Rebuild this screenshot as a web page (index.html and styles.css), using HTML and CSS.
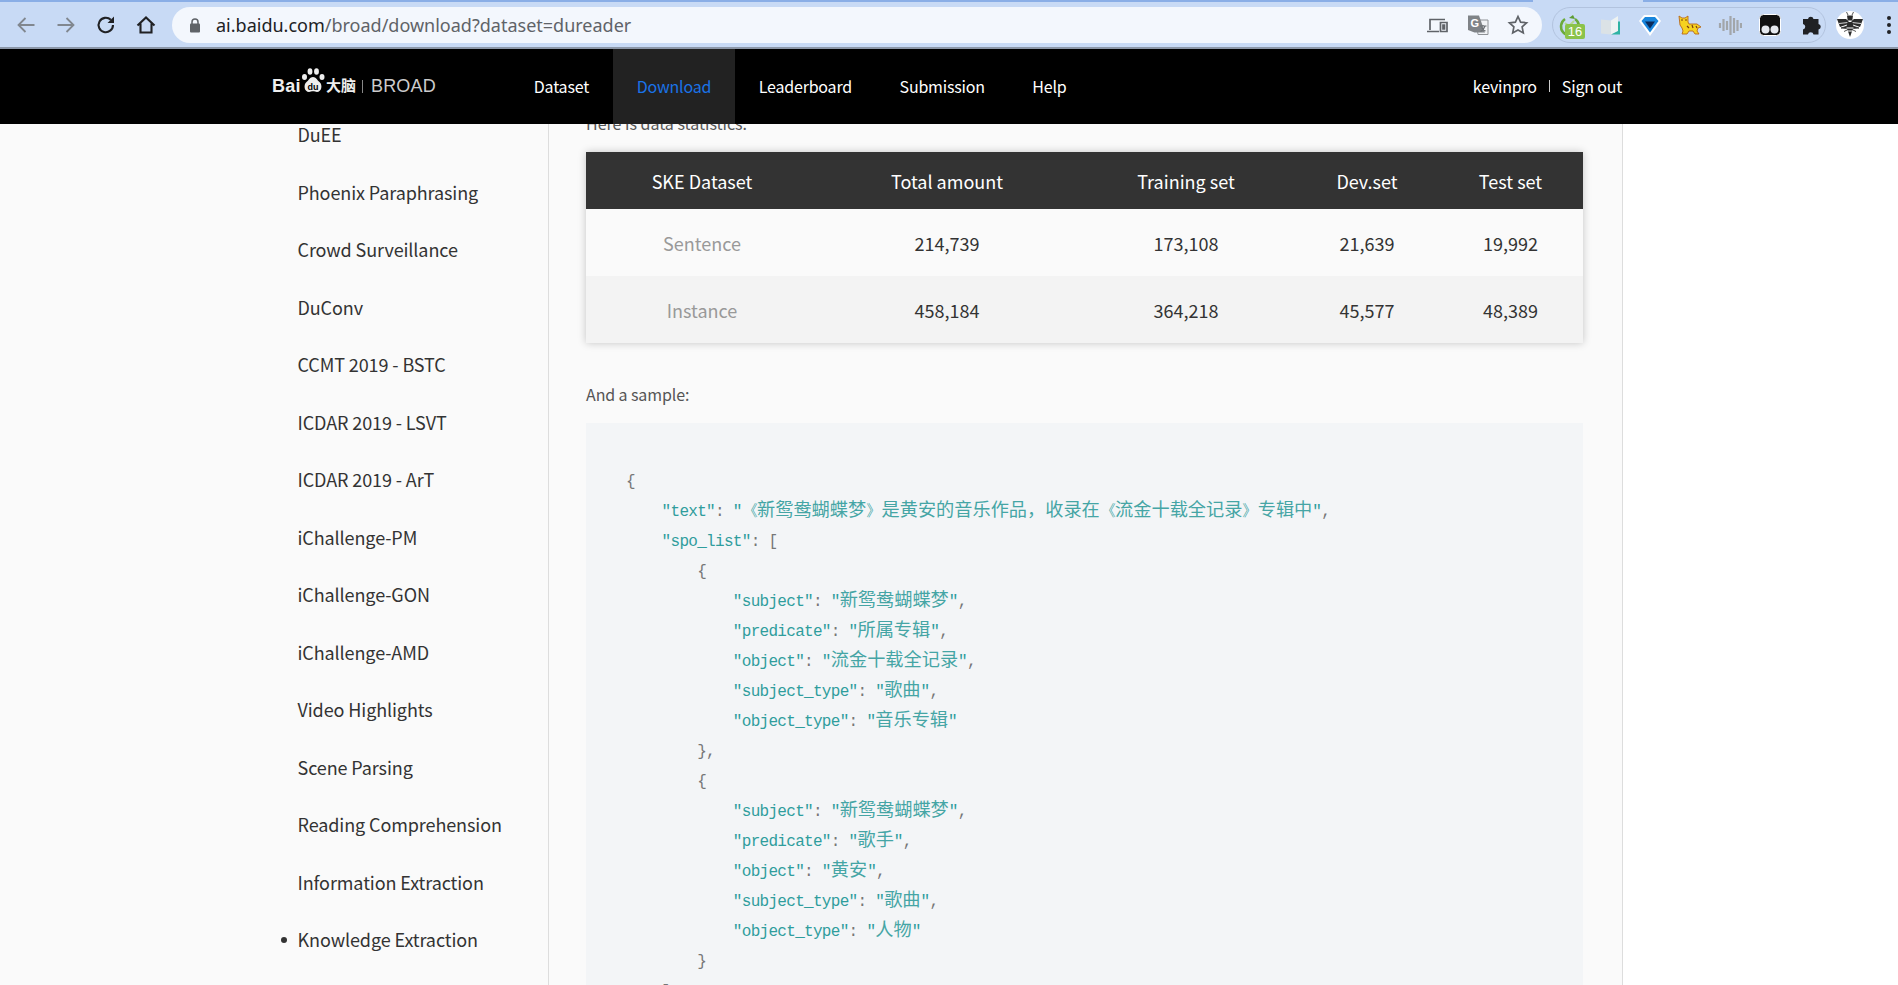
FILE: index.html
```html
<!doctype html>
<html lang="en">
    <head>
        <title>BROAD - Download</title>
        <link rel="stylesheet" href="styles.css">
    </head>
    <body>
        <div class="chrome">
            <div class="chrome-tabs"><span class="tab-strip"></span><span class="tab-gap"></span><span class="tab-strip"></span></div>
            <div class="toolbar">
                <svg class="tool-icon" viewBox="0 0 24 24"><path d="M20.500 12H4.500M11.500 5l-7 7 7 7" class="stroke-grey"/></svg>
                <svg class="tool-icon" viewBox="0 0 24 24"><path d="M3.500 12h16M12.500 5l7 7-7 7" class="stroke-grey"/></svg>
                <svg class="tool-icon" viewBox="0 0 24 24"><path d="M19 12a7.200 7.200 0 1 1-2.200-5.200" class="stroke-dark"/><path d="M20 3.500v6.500h-6.500z" class="fill-dark"/></svg>
                <svg class="tool-icon" viewBox="0 0 24 24"><path d="M3.500 12.500L12 4.500l8.500 8M6.500 10.500v9h11v-9" class="stroke-dark"/></svg>
                <div class="omnibox">
                    <svg class="lock" viewBox="0 0 12 16"><path d="M3 7V5a3 3 0 0 1 6 0v2" fill="none" stroke="#5f6368" stroke-width="1.500"/><rect x="1" y="6.500" width="10" height="9" rx="1" fill="#5f6368"/></svg>
                    <span class="url"><span class="url-host">ai.baidu.com</span>/broad/download?dataset=dureader</span>
                    <span class="omni-icons">
                        <svg class="omni-icon" viewBox="0 0 24 24"><path d="M4 17V6.500h15M1 18.500h12M14.500 9.500h6.500v9h-6.500zM17 12h1.500v4H17z" class="stroke-thin"/></svg>
                        <svg class="omni-icon" viewBox="0 0 24 24">
                            <path d="M10 7h12v14.500H12z" fill="#f1f3f6" stroke="#8e9296"/>
                            <path d="M2 2.500h11l6 17H8.500L2 17z" fill="#7f8387"/>
                            <text x="4.500" y="14" class="translate-g">G</text>
                            <path d="M14 13h6.500M17 12v1M19 13c-1 3.500-2.500 4.500-4.500 5.500M15.500 14.500c1 1.500 2.500 3 4 3.500" class="stroke-translate"/>
                        </svg>
                        <svg class="omni-icon" viewBox="0 0 24 24"><path d="M12 3.500l2.600 5.600 6 .7-4.500 4.100 1.200 6L12 17l-5.300 2.900 1.200-6-4.500-4.100 6-.7z" class="stroke-thin"/></svg>
                    </span>
                </div>
                <div class="extensions">
                    <span class="ext ext-badged">
                        <svg viewBox="0 0 24 24"><path d="M7 6a9 9 0 1 0 10 0" fill="none" stroke="#6cab3c" stroke-width="2.500"/><path d="M11 5l4-3 2 4z" fill="#5d9c32"/><path d="M7 10l4 3 5-5" fill="none" stroke="#b5d98f" stroke-width="2"/></svg>
                        <span class="ext-badge">16</span>
                    </span>
                    <span class="ext"><svg viewBox="0 0 24 24"><path d="M3 6.500l10 1v14l-10-1z" fill="#dbe2e6"/><path d="M13 7.500L20 3v15l-7 3.500z" fill="#eef3f2"/><path d="M13 21.500l7-3.500V8.500h2v13z" fill="#2fb3a3"/></svg></span>
                    <span class="ext"><svg viewBox="0 0 24 24"><path d="M1 8l5-6h12l5 6-11 15z" fill="#fff"/><path d="M3.500 8l3.500-4h10l3.500 4-8.500 11.500z" fill="#1a86dc"/><path d="M7 8.500h10l-5 7z" fill="#0a2a5a"/></svg></span>
                    <span class="ext"><svg viewBox="0 0 24 24">
                        <path d="M1 3l3 2h3l3-2v6l1 2h8l4 3-3 1-1 3 2 3h-4l-2-3h-4l-2 3H4l1-3-1-3-2-3z" fill="#f6d21f" stroke="#b8691c" stroke-width=".9"/>
                        <path d="M3 7h2M7 7h2M9 13l2 2M14 12l1 3M18 13l1 2" stroke="#7a3d10" stroke-width="1.200" fill="none"/>
                    </svg></span>
                    <span class="ext"><svg viewBox="0 0 24 24"><path d="M2 10v5M5.500 6v12M9 8v9M12.500 3v19M16 5v15M19.500 7v11M23 10v5" fill="none" stroke="#a2a6aa" stroke-width="2.200"/></svg></span>
                    <span class="ext"><svg viewBox="0 0 24 24"><rect x="1.500" y="1.500" width="21" height="21" rx="4" fill="#111" stroke="#fff"/><circle cx="7.500" cy="16.500" r="4" fill="#e6e9ee"/><circle cx="16.500" cy="16.500" r="4" fill="#e6e9ee"/></svg></span>
                    <span class="ext"><svg viewBox="0 0 24 24"><path d="M10 6a2.800 2.800 0 0 1 5.500 0h5v5a2.800 2.800 0 0 1 0 5.500v5h-5a2.800 2.800 0 0 0-5.500 0H5v-5a2.800 2.800 0 0 0 0-5.500V6z" fill="#202124"/></svg></span>
                </div>
                <span class="avatar">
                    <svg viewBox="0 0 28 28">
                        <circle cx="14" cy="14" r="14" fill="#fff"/>
                        <path d="M1 8h9l2.500 2v3L4 16zM27 8h-9l-2.500 2v3L24 16z" fill="#2b2b2b"/>
                        <path d="M3 12.500l9-1M25 12.500l-9-1" stroke="#fff" stroke-width=".8"/>
                        <path d="M11 4.500h6l-.7 5h-4.600zM11.500 11h5l1 5-3.500 10-3.500-10z" fill="#2b2b2b"/>
                        <path d="M5 17l6.500-2v2.500zM23 17l-6.500-2v2.500zM8 20.500l4-2M20 20.500l-4-2" fill="#2b2b2b" stroke="#2b2b2b" stroke-width=".8"/>
                        <path d="M10.500 17h7M11.500 20h5" stroke="#fff"/>
                        <path d="M12 4l-1.500-3M16 4l1.500-3" stroke="#2b2b2b" stroke-width=".8"/>
                    </svg>
                </span>
                <span class="menu-dots"><i></i><i></i><i></i></span>
            </div>
        </div>

        <div class="site">
            <header class="topnav">
                <a class="logo">
                    <span class="logo-bai">Bai</span>
                    <svg class="logo-paw" viewBox="0 0 24 25">
                        <ellipse cx="3.500" cy="9" rx="2.500" ry="3" fill="#eee"/>
                        <ellipse cx="9" cy="3.500" rx="2.400" ry="3.300" fill="#eee"/>
                        <ellipse cx="15.500" cy="3.500" rx="2.400" ry="3.300" fill="#eee"/>
                        <ellipse cx="21" cy="9" rx="2.500" ry="3" fill="#eee"/>
                        <path d="M12 9c3 0 4 3 6.500 5 3.500 3 2 10-2.500 10-1.500 0-2.500-.7-4-.7S9.500 24 8 24c-4.500 0-6-7-2.500-10C8 12 9 9 12 9z" fill="#eee"/>
                        <text x="12" y="21.500" class="paw-du">du</text>
                    </svg>
                    <span class="logo-cn">大脑</span>
                    <span class="logo-bar"></span>
                    <span class="logo-broad">BROAD</span>
                </a>
                <nav class="nav-links">
                    <a class="nav-link">Dataset</a>
                    <a class="nav-link active">Download</a>
                    <a class="nav-link">Leaderboard</a>
                    <a class="nav-link">Submission</a>
                    <a class="nav-link">Help</a>
                </nav>
                <div class="nav-user">
                    <a>kevinpro</a>
                    <span class="nav-sep"></span>
                    <a>Sign out</a>
                </div>
            </header>

            <div class="layout">
                <ul class="sidebar">
                    <li>DuEE</li>
                    <li>Phoenix Paraphrasing</li>
                    <li>Crowd Surveillance</li>
                    <li>DuConv</li>
                    <li>CCMT 2019 - BSTC</li>
                    <li>ICDAR 2019 - LSVT</li>
                    <li>ICDAR 2019 - ArT</li>
                    <li>iChallenge-PM</li>
                    <li>iChallenge-GON</li>
                    <li>iChallenge-AMD</li>
                    <li>Video Highlights</li>
                    <li>Scene Parsing</li>
                    <li>Reading Comprehension</li>
                    <li>Information Extraction</li>
                    <li class="current">Knowledge Extraction</li>
                </ul>
                <main class="content">
                    <p class="intro">Here is data statistics.</p>
                    <table class="stats">
                        <colgroup>
                            <col class="col-a"><col class="col-b"><col class="col-c"><col class="col-d"><col class="col-e">
                        </colgroup>
                        <thead>
                            <tr><th>SKE Dataset</th><th>Total amount</th><th>Training set</th><th>Dev.set</th><th>Test set</th></tr>
                        </thead>
                        <tbody>
                            <tr><td class="row-name">Sentence</td><td>214,739</td><td>173,108</td><td>21,639</td><td>19,992</td></tr>
                            <tr><td class="row-name">Instance</td><td>458,184</td><td>364,218</td><td>45,577</td><td>48,389</td></tr>
                        </tbody>
                    </table>
                    <p class="sample-label">And a sample:</p>
                    <div class="code">
                        <div class="line">{</div>
                        <div class="line">    <b>"text"</b>: <b>"《<i>新鸳鸯蝴蝶梦</i>》<i>是黄安的音乐作品，收录在</i>《<i>流金十载全记录</i>》<i>专辑中</i>"</b>,</div>
                        <div class="line">    <b>"spo_list"</b>: [</div>
                        <div class="line">        {</div>
                        <div class="line">            <b>"subject"</b>: <b>"<i>新鸳鸯蝴蝶梦</i>"</b>,</div>
                        <div class="line">            <b>"predicate"</b>: <b>"<i>所属专辑</i>"</b>,</div>
                        <div class="line">            <b>"object"</b>: <b>"<i>流金十载全记录</i>"</b>,</div>
                        <div class="line">            <b>"subject_type"</b>: <b>"<i>歌曲</i>"</b>,</div>
                        <div class="line">            <b>"object_type"</b>: <b>"<i>音乐专辑</i>"</b></div>
                        <div class="line">        },</div>
                        <div class="line">        {</div>
                        <div class="line">            <b>"subject"</b>: <b>"<i>新鸳鸯蝴蝶梦</i>"</b>,</div>
                        <div class="line">            <b>"predicate"</b>: <b>"<i>歌手</i>"</b>,</div>
                        <div class="line">            <b>"object"</b>: <b>"<i>黄安</i>"</b>,</div>
                        <div class="line">            <b>"subject_type"</b>: <b>"<i>歌曲</i>"</b>,</div>
                        <div class="line">            <b>"object_type"</b>: <b>"<i>人物</i>"</b></div>
                        <div class="line">        }</div>
                        <div class="line">    ]</div>
                    </div>
                </main>
            </div>
        </div>
    </body>
</html>
```

FILE: styles.css
```css
* {
    box-sizing: border-box;
}
html, body {
    height: 100%;
}
body {
    margin: 0;
    overflow: hidden;
    display: flex;
    flex-direction: column;
    background: #fff;
    color: #333;
    font-family: "Noto Sans CJK SC", "Noto Sans", sans-serif;
    font-size: 18px;
}

/* browser bar */
.chrome {
    flex: none;
    height: 49px;
    background: #c8daf5;
    border-bottom: 2px solid #8c97a8;
}
.chrome-tabs {
    display: flex;
    height: 2px;
}
.tab-strip {
    flex: 1;
    background: #8aaee6;
}
.tab-strip:first-child {
    flex: none;
    width: 1533px;
}
.tab-gap {
    width: 110px;
}
.toolbar {
    display: flex;
    align-items: center;
    height: 45px;
    padding: 0 0 0 14px;
}
.tool-icon {
    width: 24px;
    height: 24px;
    margin-right: 16px;
    flex: none;
}
.stroke-grey {
    fill: none;
    stroke: #81878f;
    stroke-width: 1.8;
}
.stroke-dark {
    fill: none;
    stroke: #202124;
    stroke-width: 2.1;
}
.fill-dark {
    fill: #202124;
}
.stroke-thin {
    fill: none;
    stroke: #5f6368;
    stroke-width: 1.7;
}
.stroke-translate {
    fill: none;
    stroke: #6b6f73;
    stroke-width: 1.200;
}
.translate-g {
    fill: #fff;
    font-family: "Liberation Sans", sans-serif;
    font-size: 11px;
    font-weight: bold;
}
.omnibox {
    display: flex;
    align-items: center;
    width: 1370px;
    height: 36px;
    margin-left: -2px;
    padding: 0 12px 0 17px;
    border-radius: 18px;
    background: #f3f7fd;
}
.lock {
    width: 12px;
    height: 16px;
    margin-right: 15px;
}
.url {
    flex: 1;
    color: #5f6368;
    font-family: "Noto Sans", sans-serif;
    font-size: 18px;
    white-space: nowrap;
}
.url-host {
    color: #202124;
}
.omni-icons {
    display: flex;
    gap: 16px;
}
.omni-icon {
    width: 24px;
    height: 24px;
}
.extensions {
    display: flex;
    align-items: center;
    gap: 16px;
    height: 36px;
    margin-left: 10px;
    padding: 0 3px 0 5px;
    border: 1px solid #b2c3de;
    border-radius: 18px;
}
.ext {
    position: relative;
    width: 24px;
    height: 24px;
    flex: none;
}
.ext svg {
    display: block;
    width: 24px;
    height: 24px;
}
.ext-badge {
    position: absolute;
    left: 7px;
    top: 11px;
    width: 20px;
    height: 15px;
    border-radius: 2px;
    background: #8bc34a;
    color: #fff;
    font-family: "Liberation Sans", sans-serif;
    font-size: 13px;
    line-height: 15px;
    text-align: center;
}
.avatar {
    width: 28px;
    height: 28px;
    margin-left: 10px;
    flex: none;
}
.avatar svg {
    display: block;
}
.menu-dots {
    display: flex;
    flex-direction: column;
    gap: 3px;
    margin-left: 23px;
}
.menu-dots i {
    width: 4px;
    height: 4px;
    border-radius: 50%;
    background: #202124;
}

/* site */
.site {
    position: relative;
    flex: 1;
    min-height: 0;
    overflow: hidden;
    background: #fff;
}
.topnav {
    position: absolute;
    left: 0;
    right: 0;
    top: 0;
    z-index: 2;
    display: flex;
    height: 75px;
    padding: 0 276px 0 272px;
    background: #000;
    color: #fff;
}
.logo {
    display: flex;
    align-items: center;
    width: 238px;
    color: #eee;
}
.logo-bai {
    font-family: "Liberation Sans", sans-serif;
    font-size: 18px;
    font-weight: bold;
    letter-spacing: 0.3px;
}
.logo-paw {
    width: 24px;
    height: 25px;
    margin-top: -12px;
}
.paw-du {
    fill: #000;
    font-family: "Liberation Sans", sans-serif;
    font-size: 9px;
    font-weight: bold;
    text-anchor: middle;
}
.logo-cn {
    margin: -4px 0 0 1px;
    font-size: 15px;
    font-weight: bold;
}
.logo-bar {
    width: 1px;
    height: 13px;
    margin: 0 8px 0 6px;
    background: #888;
}
.logo-broad {
    color: #ccc;
    font-family: "Liberation Sans", sans-serif;
    font-size: 18px;
    letter-spacing: 0.2px;
}
.nav-links {
    display: flex;
    flex: 1;
}
.nav-link {
    display: flex;
    align-items: center;
    padding: 0 23.800px 2px;
    font-size: 16px;
    letter-spacing: -0.2px;
}
.nav-link.active {
    background: #222;
    color: #1a73e8;
}
.nav-user {
    display: flex;
    align-items: center;
    padding-bottom: 2px;
    font-size: 16px;
    letter-spacing: -0.2px;
}
.nav-sep {
    width: 1px;
    height: 12px;
    margin: 0 12px 0 12px;
    background: #ccc;
}

.layout {
    display: flex;
    height: 100%;
}
.sidebar {
    width: 549px;
    flex: none;
    margin: 0;
    padding: 57px 0 0 297.500px;
    list-style: none;
    border-right: 1px solid #ddd;
    background: #fafafa;
    font-size: 18px;
    letter-spacing: -0.1px;
}
.sidebar li {
    position: relative;
    height: 57.500px;
    line-height: 57.500px;
    white-space: nowrap;
}
.current::before {
    content: "";
    position: absolute;
    left: -17px;
    top: 26px;
    width: 6px;
    height: 6px;
    border-radius: 50%;
    background: #333;
}
.content {
    width: 1074px;
    flex: none;
    padding: 0 39px 0 37px;
    border-right: 1px solid #ddd;
    background: #fafafa;
    overflow: hidden;
}
.intro {
    margin: 59px 0 0;
    color: #555;
    font-size: 16px;
    line-height: 30px;
}
.stats {
    width: 997px;
    margin-top: 14px;
    border-collapse: collapse;
    table-layout: fixed;
    box-shadow: 0 0 8px rgba(0, 0, 0, 0.22);
    text-align: center;
}
.col-a {
    width: 232px;
}
.col-b {
    width: 258px;
}
.col-c {
    width: 220px;
}
.col-d {
    width: 142px;
}
.stats th {
    height: 57px;
    padding: 0;
    background: #333;
    color: #fff;
    font-weight: normal;
}
.stats td {
    height: 67px;
    padding: 0;
    font-size: 18px;
}
.stats tbody tr:nth-child(2) {
    background: #f3f3f3;
}
.row-name {
    color: #999;
}
.sample-label {
    margin: 36px 0 0;
    color: #555;
    font-size: 16px;
    letter-spacing: -0.1px;
    line-height: 30px;
}
.code {
    height: 600px;
    margin: 14px 0 0;
    padding: 44px 0 0 40px;
    background: #f3f5f7;
    color: #777;
    font-family: "Liberation Mono", monospace;
    font-size: 16px;
    letter-spacing: -0.7px;
    line-height: 30px;
}
.line {
    height: 30px;
    white-space: pre;
}
.code b {
    color: #2f9d9d;
    font-weight: normal;
}
.code i {
    color: #45a5a5;
    font-family: "Noto Sans CJK SC", sans-serif;
    font-size: 18.200px;
    font-style: normal;
    letter-spacing: 0;
    line-height: 0;
}
```
